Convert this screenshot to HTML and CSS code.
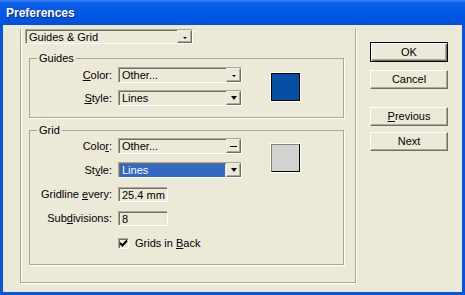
FILE: index.html
```html
<!DOCTYPE html>
<html lang="en">

<head>
    <meta charset="UTF-8">
    <title>Preferences</title>
    <link rel="stylesheet" href="styles.css">
</head>

<body>
    <div class="window">
        <div class="titlebar">Preferences</div>
        <div class="client">
            <div class="pane">
                <!-- page selector -->
                <div class="combo combo-page">
                    <span class="combo-text">Guides &amp; Grid</span>
                    <span class="combo-btn"><i class="arrow arrow-small"></i></span>
                </div>

                <fieldset class="group group-guides">
                    <legend>Guides</legend>
                    <div class="rows">
                        <span class="lbl"><u>C</u>olor:</span>
                        <div class="combo">
                            <span class="combo-text">Other...</span>
                            <span class="combo-btn"><i class="arrow arrow-small"></i></span>
                        </div>
                        <div class="swatch swatch-blue"></div>
                        <span class="lbl"><u>S</u>tyle:</span>
                        <div class="combo">
                            <span class="combo-text">Lines</span>
                            <span class="combo-btn"><i class="arrow"></i></span>
                        </div>
                    </div>
                </fieldset>

                <fieldset class="group group-grid">
                    <legend>Grid</legend>
                    <div class="rows">
                        <span class="lbl">Colo<u>r</u>:</span>
                        <div class="combo">
                            <span class="combo-text">Other...</span>
                            <span class="combo-btn"><i class="dash"></i></span>
                        </div>
                        <div class="swatch swatch-gray"></div>
                        <span class="lbl">St<u>y</u>le:</span>
                        <div class="combo">
                            <span class="combo-text selected">Lines</span>
                            <span class="combo-btn"><i class="arrow"></i></span>
                        </div>
                        <span class="lbl">Gridline <u>e</u>very:</span>
                        <div class="textbox">25.4 mm</div>
                        <span class="lbl">Sub<u>d</u>ivisions:</span>
                        <div class="textbox">8</div>
                        <div class="check-row">
                            <span class="checkbox">
                                <svg width="9" height="9" viewBox="0 0 9 9">
                                    <path d="M1 4 L3.5 6.5 L8 1.5" fill="none" stroke="#000" stroke-width="2"/>
                                </svg>
                            </span>
                            <span>Grids in <u>B</u>ack</span>
                        </div>
                    </div>
                </fieldset>
            </div>

            <div class="buttons">
                <div class="btn btn-default">OK</div>
                <div class="btn btn-cancel">Cancel</div>
                <div class="btn btn-prev"><u>P</u>revious</div>
                <div class="btn btn-next">Next</div>
            </div>
        </div>
    </div>
</body>

</html>
```

FILE: styles.css
```css
body {
    margin: 0;
    font-family: "Liberation Sans", Arial, sans-serif;
    font-size: 11px;
    color: #000;
}

.window {
    width: 465px;
    height: 295px;
    display: flex;
    flex-direction: column;
    background: #0754de;
}

.titlebar {
    height: 25px;
    box-sizing: border-box;
    padding: 6px 0 0 6px;
    background: linear-gradient(#3a87f2 0, #0b5fe8 3px, #0055e5 60%, #0150dc 100%);
    color: #fff;
    font-weight: bold;
    font-size: 12px;
    line-height: 14px;
    text-shadow: 1px 1px 0 #0a2a8c;
}

.client {
    flex: 1;
    margin: 0 3px 3px;
    background: #ece9d8;
    display: flex;
    padding: 4px 0 9px 17px;
}

/* left panel frame, no top edge */
.pane {
    width: 336px;
    box-sizing: border-box;
    border: 1px solid #aca899;
    border-top: none;
    box-shadow: 1px 1px 0 #fff, inset 1px 0 0 #fff;
}

.combo {
    height: 16px;
    box-sizing: border-box;
    display: flex;
    border: 1px solid;
    border-color: #aca899 #fff #fff #aca899;
    box-shadow: inset 1px 1px 0 #716f64;
    background: #ece9d8;
}

.combo-text {
    flex: 1;
    padding: 1px 0 0 3px;
    line-height: 13px;
    white-space: nowrap;
}

.combo-text.selected {
    background: #316ac5;
    color: #fff;
    margin: 1px 1px 0 1px;
    padding: 0 0 0 2px;
}

.combo-btn {
    width: 15px;
    box-sizing: border-box;
    border: 1px solid;
    border-color: #f1efe2 #716f64 #716f64 #f1efe2;
    box-shadow: inset -1px -1px 0 #aca899;
    display: flex;
    align-items: center;
    justify-content: center;
}

.arrow {
    width: 0;
    height: 0;
    border-left: 3.5px solid transparent;
    border-right: 3.5px solid transparent;
    border-top: 4px solid #000;
}

.arrow-small {
    border-left-width: 2px;
    border-right-width: 2px;
    border-top-width: 2px;
    margin-top: 2px;
}

.dash {
    width: 7px;
    height: 1px;
    background: #000;
}

.combo-page {
    width: 168px;
    height: 15px;
    margin-left: 4px;
}

.group {
    margin: 8px 11px 0 8px;
    padding: 2px 0 11px 0;
    border: 1px solid #aca899;
    box-shadow: 1px 1px 0 #fff;
}

.group legend {
    margin-left: 7px;
    padding: 0 2px;
    line-height: 13px;
}

.group-grid {
    margin-top: 6px;
    padding: 1px 0 14px 0;
}

.rows {
    display: grid;
    grid-template-columns: 82px 124px auto;
    grid-auto-rows: 16px;
    column-gap: 6px;
    row-gap: 7px;
    align-items: center;
}

.group-grid .rows {
    row-gap: 8px;
}

.lbl {
    grid-column: 1;
    text-align: right;
    white-space: nowrap;
}

.swatch {
    grid-column: 3;
    grid-row: 1 / span 2;
    width: 29px;
    height: 28px;
    box-sizing: border-box;
    margin-left: 23px;
    border: 1px solid #000;
    box-shadow: 0 0 0 1px #fff;
}

.swatch-blue {
    background: #0550a3;
}

.swatch-gray {
    background: #d2d2ce;
    border-color: #8a887c #000 #000 #8a887c;
}

.textbox {
    grid-column: 2;
    width: 50px;
    height: 15px;
    box-sizing: border-box;
    border: 1px solid;
    border-color: #aca899 #fff #fff #aca899;
    box-shadow: inset 1px 1px 0 #716f64;
    padding: 1px 0 0 3px;
    line-height: 12px;
}

.check-row {
    grid-column: 2;
    display: flex;
    align-items: center;
    gap: 6px;
    margin-top: 2px;
}

.checkbox {
    width: 11px;
    height: 11px;
    box-sizing: border-box;
    border: 1px solid;
    border-color: #aca899 #fff #fff #aca899;
    box-shadow: inset 1px 1px 0 #716f64;
    display: flex;
    align-items: center;
    justify-content: center;
}

.buttons {
    display: flex;
    flex-direction: column;
    margin: 13px 0 0 14px;
}

.btn {
    width: 78px;
    height: 19px;
    box-sizing: border-box;
    border: 1px solid;
    border-color: #fff #716f64 #716f64 #fff;
    box-shadow: inset -1px -1px 0 #aca899;
    text-align: center;
    line-height: 17px;
}

.btn-default {
    height: 20px;
    border: 1px solid #000;
    box-shadow: inset 1px 1px 0 #fff, inset -1px -1px 0 #716f64, inset -2px -2px 0 #aca899;
    line-height: 18px;
}

.btn-cancel {
    margin-top: 8px;
}

.btn-prev {
    margin-top: 18px;
}

.btn-next {
    margin-top: 6px;
}
```
